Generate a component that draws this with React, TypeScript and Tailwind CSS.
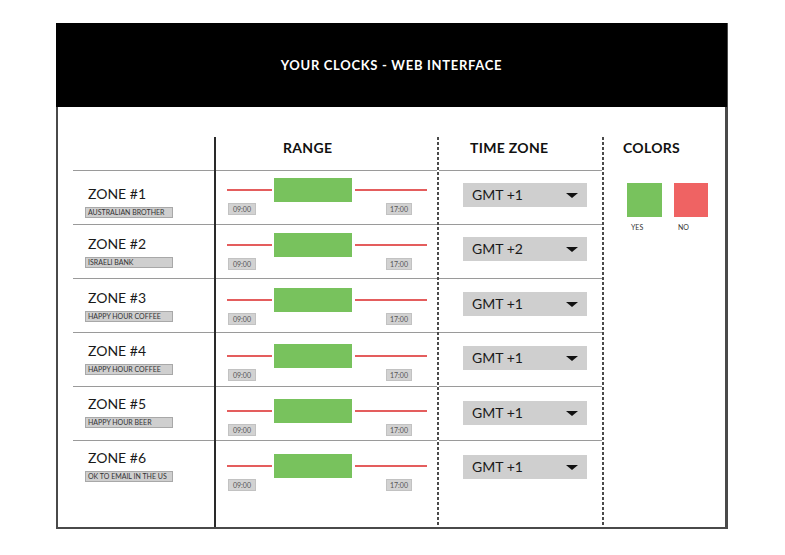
import React from 'react';

type Zone = {
  name: string;
  label: string;
  gmt: string;
  zonePad: string;
  rangePad: string;
  selectPad: string;
};

const zones: Zone[] = [
  { name: 'ZONE #1', label: 'AUSTRALIAN BROTHER', gmt: 'GMT +1', zonePad: 'pt-[16px]', rangePad: 'pt-[7px]', selectPad: 'pt-[12px]' },
  { name: 'ZONE #2', label: 'ISRAELI BANK', gmt: 'GMT +2', zonePad: 'pt-[12px]', rangePad: 'pt-[8px]', selectPad: 'pt-[12px]' },
  { name: 'ZONE #3', label: 'HAPPY HOUR COFFEE', gmt: 'GMT +1', zonePad: 'pt-[12px]', rangePad: 'pt-[9px]', selectPad: 'pt-[13px]' },
  { name: 'ZONE #4', label: 'HAPPY HOUR COFFEE', gmt: 'GMT +1', zonePad: 'pt-[11px]', rangePad: 'pt-[11px]', selectPad: 'pt-[13px]' },
  { name: 'ZONE #5', label: 'HAPPY HOUR BEER', gmt: 'GMT +1', zonePad: 'pt-[10px]', rangePad: 'pt-[12px]', selectPad: 'pt-[14px]' },
  { name: 'ZONE #6', label: 'OK TO EMAIL IN THE US', gmt: 'GMT +1', zonePad: 'pt-[10px]', rangePad: 'pt-[13px]', selectPad: 'pt-[14px]' },
];

const Dashed = () => (
  <div className="w-[2px] shrink-0 bg-[repeating-linear-gradient(to_bottom,#4a4a4a_0px,#4a4a4a_3px,transparent_3px,transparent_5px)]" />
);

const TimeTag = ({ text, className }: { text: string; className: string }) => (
  <div className={`h-[12px] bg-[#d2d2d2] border border-[#c2c2c2] flex items-center justify-center text-[7px] leading-none text-[#555] ${className}`}>
    {text}
  </div>
);

export default function App() {
  return (
    <div className="w-[785px] h-[555px] bg-white pt-[23px] pl-[56px] font-['Lato','Liberation_Sans',sans-serif] text-[#111]">
      <div className="w-[672px] h-[506px] flex flex-col border-l-2 border-r-[3px] border-b-2 border-[#4a4a4a]">
        {/* Title bar */}
        <div className="h-[84px] -mx-[2px] bg-black flex items-center justify-center shrink-0">
          <h1 className="text-white text-[13px] font-bold tracking-[0.7px] leading-none">YOUR CLOCKS - WEB INTERFACE</h1>
        </div>

        <div className="flex-1 flex pt-[30px]">
          {/* Zone names */}
          <div className="w-[156px] shrink-0 flex flex-col">
            <div className="h-[33px]" />
            {zones.map((z) => (
              <div key={z.name} className={`h-[54px] ml-[15px] border-t border-[#9a9a9a] ${z.zonePad}`}>
                <div className="pl-[15px] text-[14px] leading-[14px] text-[#1a1a1a]">{z.name}</div>
                <div className="mt-[6px] ml-[12px] w-[88px] h-[11px] bg-[#cfcfcf] border border-[#a8a8a8] flex items-center pl-[2px] text-[7px] leading-none text-[#333] whitespace-nowrap">
                  {z.label}
                </div>
              </div>
            ))}
          </div>

          <div className="w-[2px] shrink-0 bg-[#2a2a2a]" />

          {/* Range */}
          <div className="w-[221px] shrink-0 flex flex-col">
            <div className="h-[33px] pt-[4px] pl-[67px] text-[14px] font-bold leading-[14px] tracking-[0.3px]">RANGE</div>
            {zones.map((z) => (
              <div key={z.name} className={`h-[54px] border-t border-[#9a9a9a] ${z.rangePad}`}>
                <div className="flex items-center h-[24px]">
                  <div className="ml-[11px] w-[45px] h-[2px] bg-[#e45d5d]" />
                  <div className="ml-[2px] w-[78px] h-[24px] bg-[#78c25d]" />
                  <div className="ml-[3px] w-[72px] h-[2px] bg-[#e45d5d]" />
                </div>
                <div className="flex mt-[1px]">
                  <TimeTag text="09:00" className="ml-[12px] w-[28px]" />
                  <TimeTag text="17:00" className="ml-[130px] w-[26px]" />
                </div>
              </div>
            ))}
          </div>

          <Dashed />

          {/* Time zone */}
          <div className="w-[163px] shrink-0 flex flex-col">
            <div className="h-[33px] pt-[4px] pl-[31px] text-[14px] font-bold leading-[14px] tracking-[0.3px]">TIME ZONE</div>
            {zones.map((z) => (
              <div key={z.name} className={`h-[54px] border-t border-[#9a9a9a] ${z.selectPad}`}>
                <div className="ml-[24px] w-[124px] h-[24px] bg-[#cfcfcf] flex items-center justify-between pl-[9px] pr-[9px]">
                  <span className="text-[14px] leading-none text-[#1a1a1a]">{z.gmt}</span>
                  <svg width="12" height="5" viewBox="0 0 12 5">
                    <polygon points="0,0 12,0 6,5" fill="#111" />
                  </svg>
                </div>
              </div>
            ))}
          </div>

          <Dashed />

          {/* Colors */}
          <div className="flex-1 flex flex-col">
            <div className="h-[33px] pt-[4px] pl-[19px] text-[14px] font-bold leading-[14px] tracking-[0.3px]">COLORS</div>
            <div className="pt-[13px] pl-[23px] flex gap-[12px]">
              <div className="flex flex-col">
                <div className="w-[35px] h-[34px] bg-[#78c25d]" />
                <span className="mt-[7px] pl-[4px] text-[7px] leading-none text-[#333]">YES</span>
              </div>
              <div className="flex flex-col">
                <div className="w-[34px] h-[34px] bg-[#ef6363]" />
                <span className="mt-[7px] pl-[4px] text-[7px] leading-none text-[#333]">NO</span>
              </div>
            </div>
          </div>
        </div>
      </div>
    </div>
  );
}
